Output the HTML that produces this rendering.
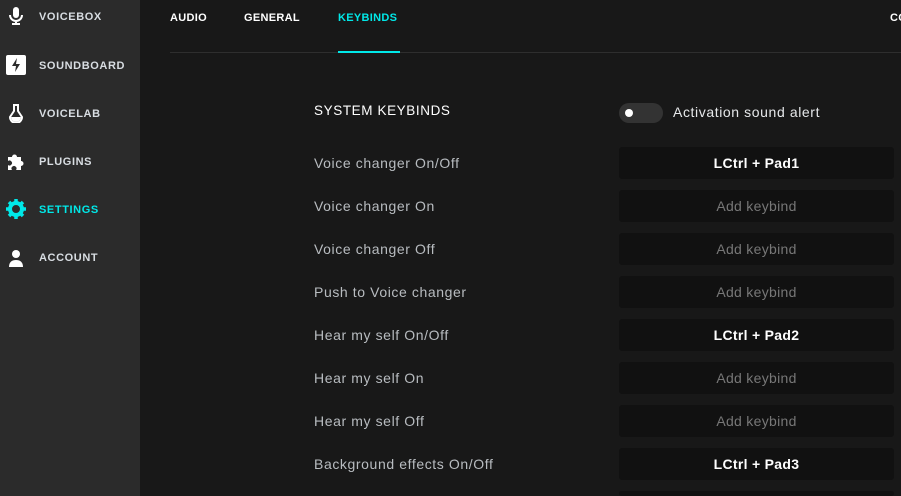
<!DOCTYPE html>
<html style="overflow:hidden;height:496px"><head><style>
*{margin:0;padding:0;box-sizing:border-box}
body{width:901px;height:496px;overflow:hidden;background:#181818;font-family:"Liberation Sans",sans-serif;position:relative}
.side{position:absolute;left:0;top:0;width:140px;height:496px;background:#2b2b2b}
.nav{position:absolute;left:39px;font-size:11px;font-weight:bold;letter-spacing:.6px;color:#d8dde2}
.ic{position:absolute;left:6px;width:20px;height:20px}
.tab{position:absolute;top:12px;font-size:11px;font-weight:bold;color:#fff;letter-spacing:.3px}
.lbl{position:absolute;left:314px;font-size:14px;color:#b8bcc0;letter-spacing:.6px}
.box{position:absolute;left:619px;width:275px;height:32px;background:#111;border-radius:3px;text-align:center;line-height:32px;font-size:14px;letter-spacing:.3px;color:#777}
.box.s{color:#fff;font-weight:bold}
</style></head><body>
<div class="side">
<svg class="ic" style="top:6px" viewBox="0 0 20 20"><rect x="7" y="1" width="6" height="11" rx="3" fill="#fff"/><path d="M4 9a6 6 0 0 0 12 0M10 15v3M6 18h8" stroke="#fff" stroke-width="2" fill="none"/></svg>
<div class="nav" style="top:11px">VOICEBOX</div>
<svg class="ic" style="top:55px" viewBox="0 0 20 20"><rect x="0" y="0" width="20" height="20" rx="2" fill="#fff"/><path d="M11 3L6 11h4l-1 6 5-8h-4z" fill="#2b2b2b"/></svg>
<div class="nav" style="top:60px">SOUNDBOARD</div>
<svg class="ic" style="top:103px" viewBox="0 0 20 20"><path d="M7 2h6M8 2v6L4 14a5 5 0 1 0 12 0l-4-6V2" stroke="#fff" stroke-width="2" fill="none"/><path d="M5 14a5 5 0 0 0 10 0z" fill="#fff"/></svg>
<div class="nav" style="top:108px">VOICELAB</div>
<svg class="ic" style="top:151px" viewBox="0 0 20 20"><path d="M2 6h4a2.5 2.5 0 1 1 5 0h4v4a2.5 2.5 0 1 1 0 5v4h-5a2.5 2.5 0 1 0-4 0H2v-5a2.5 2.5 0 1 0 0-4z" fill="#fff"/></svg>
<div class="nav" style="top:156px">PLUGINS</div>
<svg class="ic" style="top:199px" viewBox="0 0 20 20"><circle cx="10" cy="10" r="6" fill="none" stroke="#00e8e8" stroke-width="4"/><g stroke="#00e8e8" stroke-width="3.5"><path d="M10 0v4M10 16v4M0 10h4M16 10h4M3 3l3 3M14 14l3 3M17 3l-3 3M3 17l3-3"/></g></svg>
<div class="nav" style="top:204px;color:#00e8e8">SETTINGS</div>
<svg class="ic" style="top:248px" viewBox="0 0 20 20"><circle cx="10" cy="6" r="4" fill="#fff"/><path d="M3 19c0-5 3-7 7-7s7 2 7 7z" fill="#fff"/></svg>
<div class="nav" style="top:252px">ACCOUNT</div>
</div>
<div class="tab" style="left:170px">AUDIO</div>
<div class="tab" style="left:244px">GENERAL</div>
<div class="tab" style="left:338px;color:#00e8e8">KEYBINDS</div>
<div class="tab" style="left:890px">CO</div>
<div style="position:absolute;left:170px;top:52px;width:731px;height:1px;background:#2e2e2e"></div>
<div style="position:absolute;left:338px;top:51px;width:62px;height:2px;background:#00e8e8"></div>
<div class="lbl" style="top:103px;color:#fff;font-size:13.5px;letter-spacing:.6px">SYSTEM KEYBINDS</div>
<div style="position:absolute;left:619px;top:103px;width:44px;height:20px;border-radius:10px;background:#333"></div>
<div style="position:absolute;left:625px;top:109px;width:8px;height:8px;border-radius:4px;background:#fff"></div>
<div style="position:absolute;left:673px;top:104px;font-size:14px;color:#e6e8ea;letter-spacing:.6px">Activation sound alert</div>
<div class="lbl" style="top:155px">Voice changer On/Off</div><div class="box s" style="top:147px">LCtrl + Pad1</div>
<div class="lbl" style="top:198px">Voice changer On</div><div class="box" style="top:190px">Add keybind</div>
<div class="lbl" style="top:241px">Voice changer Off</div><div class="box" style="top:233px">Add keybind</div>
<div class="lbl" style="top:284px">Push to Voice changer</div><div class="box" style="top:276px">Add keybind</div>
<div class="lbl" style="top:327px">Hear my self On/Off</div><div class="box s" style="top:319px">LCtrl + Pad2</div>
<div class="lbl" style="top:370px">Hear my self On</div><div class="box" style="top:362px">Add keybind</div>
<div class="lbl" style="top:413px">Hear my self Off</div><div class="box" style="top:405px">Add keybind</div>
<div class="lbl" style="top:456px">Background effects On/Off</div><div class="box s" style="top:448px">LCtrl + Pad3</div>
<div class="box" style="top:491px;height:5px"></div>
</body></html>
